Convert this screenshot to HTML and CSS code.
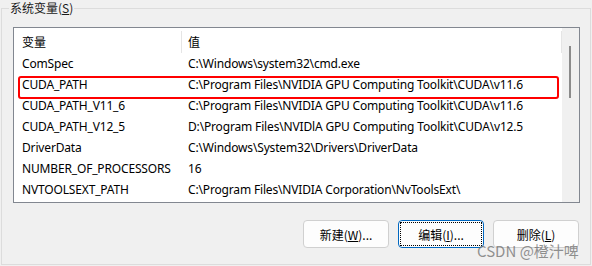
FILE: index.html
```html
<!DOCTYPE html>
<html>
<head>
  <link rel="stylesheet" href="styles.css">
</head>
<body>
  <div class="group">
    <span class="legend">系统变量(<u>S</u>)</span>

    <div class="list">
      <div class="list-body">
        <div class="list-header">
          <span class="col-name">变量</span>
          <span class="col-value">值</span>
        </div>
        <div class="row"><span class="col-name">ComSpec</span><span class="col-value">C:\Windows\system32\cmd.exe</span></div>
        <div class="row"><span class="col-name">CUDA_PATH</span><span class="col-value">C:\Program Files\NVIDIA GPU Computing Toolkit\CUDA\v11.6</span></div>
        <div class="row"><span class="col-name">CUDA_PATH_V11_6</span><span class="col-value">C:\Program Files\NVIDIA GPU Computing Toolkit\CUDA\v11.6</span></div>
        <div class="row"><span class="col-name">CUDA_PATH_V12_5</span><span class="col-value">D:\Program Files\NVIDlA GPU Computing Toolkit\CUDA\v12.5</span></div>
        <div class="row"><span class="col-name">DriverData</span><span class="col-value">C:\Windows\System32\Drivers\DriverData</span></div>
        <div class="row"><span class="col-name">NUMBER_OF_PROCESSORS</span><span class="col-value">16</span></div>
        <div class="row"><span class="col-name">NVTOOLSEXT_PATH</span><span class="col-value">C:\Program Files\NVIDIA Corporation\NvToolsExt\</span></div>
      </div>
      <div class="scrollbar">
        <div class="thumb"></div>
      </div>
      <div class="highlight"></div>
    </div>

    <div class="buttons">
      <button class="btn">新建(<u>W</u>)...</button>
      <button class="btn focused">编辑(<u>I</u>)...</button>
      <button class="btn">删除(<u>L</u>)</button>
    </div>

    <span class="watermark">CSDN @橙汁啤</span>
  </div>
</body>
</html>
```

FILE: styles.css
```css
body {
  margin: 0;
  width: 592px;
  height: 266px;
  overflow: hidden;
  background-color: #f0f0f0;
  font-family: "Noto Sans", "Noto Sans CJK SC", sans-serif;
  font-size: 12px;
  color: #000;
}

.group {
  position: relative;
  margin: 8px 1px 0 1px;
  height: 257px;
  box-sizing: border-box;
  border: 1px solid #dcdcdc;
}

.legend {
  position: absolute;
  left: 7px;
  top: -10px;
  padding: 0 1px;
  background-color: #f0f0f0;
  font-family: "Noto Sans CJK SC", sans-serif;
  font-size: 12px;
  line-height: 18px;
  color: #1a1a1a;
}

.list {
  position: relative;
  display: flex;
  margin: 18px 0 0 11px;
  width: 567px;
  height: 176px;
  box-sizing: border-box;
  border: 1px solid #828790;
  background-color: #fff;
}

.list-body {
  flex: 1;
}

.list-header {
  display: flex;
  height: 25px;
  align-items: center;
  font-family: "Noto Sans CJK SC", sans-serif;
}

.list-header .col-name {
  border-right: 1px solid #e5e5e5;
  height: 22px;
  line-height: 22px;
  margin-top: 2px;
}

.list-header .col-value {
  flex: 1;
  border-right: 1px solid #e5e5e5;
  height: 22px;
  line-height: 22px;
  margin-top: 2px;
}

.row {
  display: flex;
  height: 21px;
  line-height: 21px;
  white-space: nowrap;
  letter-spacing: -0.16px;
}

.col-name {
  width: 168px;
  padding-left: 8px;
  box-sizing: border-box;
  overflow: hidden;
}

.col-value {
  padding-left: 6px;
}

.scrollbar {
  width: 17px;
  background-color: #f0f0f0;
  position: relative;
}

.thumb {
  margin: 18px 0 0 7px;
  width: 2px;
  height: 52px;
  background-color: #8b8b8b;
}

.highlight {
  position: absolute;
  left: 4px;
  top: 48px;
  width: 541px;
  height: 23px;
  box-sizing: border-box;
  border: 2px solid #f00;
  border-radius: 3px;
}

.buttons {
  display: flex;
  justify-content: flex-end;
  gap: 9px;
  margin: 17px 11px 0 0;
}

.btn {
  position: relative;
  width: 86px;
  height: 28px;
  padding: 0;
  border: 1px solid #d0d0d0;
  border-radius: 4px;
  background-color: #fdfdfd;
  font-family: "Noto Sans CJK SC", sans-serif;
  font-size: 12px;
  color: #000;
}

.btn.focused {
  border-color: #0067c0;
}

.btn.focused::after {
  content: "";
  position: absolute;
  inset: 1px;
  border: 1px dotted #000;
}

.watermark {
  position: absolute;
  left: 475px;
  top: 231px;
  font-family: "Noto Sans CJK SC", sans-serif;
  font-size: 15px;
  color: rgba(110, 110, 110, 0.75);
  white-space: nowrap;
}
```
